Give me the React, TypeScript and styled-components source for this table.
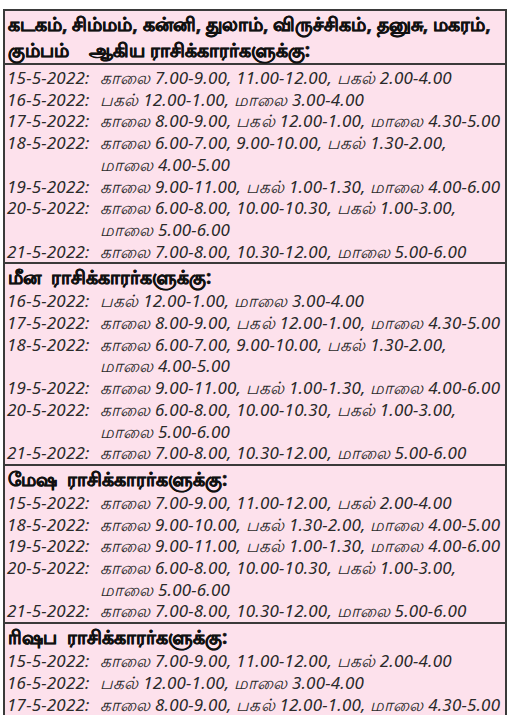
import React from 'react';
import styled, { createGlobalStyle } from 'styled-components';

const GlobalStyle = createGlobalStyle`
  html, body {
    margin: 0;
    padding: 0;
    background: #ffffff;
  }
  body {
    font-family: "Noto Sans", "DejaVu Sans", sans-serif;
  }
`;

const Page = styled.div`
  width: 513px;
  height: 720px;
  overflow: hidden;
  padding-top: 9px;
  box-sizing: border-box;
`;

const Table = styled.div`
  margin-left: 3px;
  width: 504px;
  box-sizing: border-box;
  background: #fde1ec;
  border: 2px solid #3a3a3a;
  border-bottom: none;
`;

const Section = styled.section<{ $first?: boolean }>`
  border-top: ${p => (p.$first ? 'none' : '2px solid #3a3a3a')};
`;

const Heading = styled.h2<{ $ruled?: boolean }>`
  margin: 0;
  padding: 0 3px;
  font-size: 19px;
  font-weight: 700;
  line-height: 26px;
  color: #111;
  white-space: pre;
  -webkit-text-stroke: 0.5px #111;
  border-bottom: ${p => (p.$ruled ? '2px solid #3a3a3a' : 'none')};
  margin-bottom: ${p => (p.$ruled ? '2px' : '0')};
`;

const Row = styled.div`
  display: grid;
  grid-template-columns: 93px 1fr;
  padding: 0 2px;
  font-style: italic;
  font-size: 17px;
  letter-spacing: 0.2px;
  line-height: 21.7px;
  color: #2a2a2a;
`;

const DateLabel = styled.span`
  white-space: nowrap;
`;

const Times = styled.span`
  white-space: pre-line;
`;

type Entry = [string, string];

interface Group {
  title: string;
  ruled?: boolean;
  rows: Entry[];
}

const groups: Group[] = [
  {
    title: 'கடகம், சிம்மம், கன்னி, துலாம், விருச்சிகம், தனுசு, மகரம்,\nகும்பம்    ஆகிய ராசிக்காரர்களுக்கு:',
    ruled: true,
    rows: [
      ['15-5-2022:', 'காலை 7.00-9.00, 11.00-12.00, பகல் 2.00-4.00'],
      ['16-5-2022:', 'பகல் 12.00-1.00, மாலை 3.00-4.00'],
      ['17-5-2022:', 'காலை 8.00-9.00, பகல் 12.00-1.00, மாலை 4.30-5.00'],
      ['18-5-2022:', 'காலை 6.00-7.00, 9.00-10.00, பகல் 1.30-2.00,\nமாலை 4.00-5.00'],
      ['19-5-2022:', 'காலை 9.00-11.00, பகல் 1.00-1.30, மாலை 4.00-6.00'],
      ['20-5-2022:', 'காலை 6.00-8.00, 10.00-10.30, பகல் 1.00-3.00,\nமாலை 5.00-6.00'],
      ['21-5-2022:', 'காலை 7.00-8.00, 10.30-12.00, மாலை 5.00-6.00'],
    ],
  },
  {
    title: 'மீன  ராசிக்காரர்களுக்கு:',
    rows: [
      ['16-5-2022:', 'பகல் 12.00-1.00, மாலை 3.00-4.00'],
      ['17-5-2022:', 'காலை 8.00-9.00, பகல் 12.00-1.00, மாலை 4.30-5.00'],
      ['18-5-2022:', 'காலை 6.00-7.00, 9.00-10.00, பகல் 1.30-2.00,\nமாலை 4.00-5.00'],
      ['19-5-2022:', 'காலை 9.00-11.00, பகல் 1.00-1.30, மாலை 4.00-6.00'],
      ['20-5-2022:', 'காலை 6.00-8.00, 10.00-10.30, பகல் 1.00-3.00,\nமாலை 5.00-6.00'],
      ['21-5-2022:', 'காலை 7.00-8.00, 10.30-12.00, மாலை 5.00-6.00'],
    ],
  },
  {
    title: 'மேஷ  ராசிக்காரர்களுக்கு:',
    rows: [
      ['15-5-2022:', 'காலை 7.00-9.00, 11.00-12.00, பகல் 2.00-4.00'],
      ['18-5-2022:', 'காலை 9.00-10.00, பகல் 1.30-2.00, மாலை 4.00-5.00'],
      ['19-5-2022:', 'காலை 9.00-11.00, பகல் 1.00-1.30, மாலை 4.00-6.00'],
      ['20-5-2022:', 'காலை 6.00-8.00, 10.00-10.30, பகல் 1.00-3.00,\nமாலை 5.00-6.00'],
      ['21-5-2022:', 'காலை 7.00-8.00, 10.30-12.00, மாலை 5.00-6.00'],
    ],
  },
  {
    title: 'ரிஷப  ராசிக்காரர்களுக்கு:',
    rows: [
      ['15-5-2022:', 'காலை 7.00-9.00, 11.00-12.00, பகல் 2.00-4.00'],
      ['16-5-2022:', 'பகல் 12.00-1.00, மாலை 3.00-4.00'],
      ['17-5-2022:', 'காலை 8.00-9.00, பகல் 12.00-1.00, மாலை 4.30-5.00'],
    ],
  },
];

const App: React.FC = () => {
  return (
    <>
      <GlobalStyle />
      <Page>
        <Table>
          {groups.map((g, i) => (
            <Section key={i} $first={i === 0}>
              <Heading $ruled={g.ruled}>{g.title}</Heading>
              {g.rows.map(([date, times]) => (
                <Row key={date}>
                  <DateLabel>{date}</DateLabel>
                  <Times>{times}</Times>
                </Row>
              ))}
            </Section>
          ))}
        </Table>
      </Page>
    </>
  );
};

export default App;
